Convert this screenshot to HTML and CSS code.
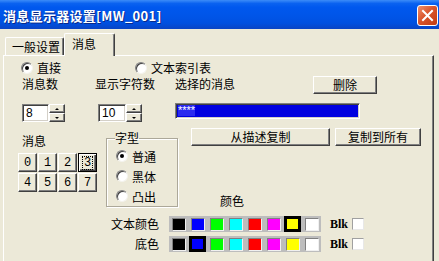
FILE: index.html
```html
<!DOCTYPE html>
<html>
<head>
<meta charset="utf-8">
<link rel="stylesheet" href="styles.css">
</head>
<body>
<div class="titlebar">
  <span class="title">消息显示器设置[MW_001]</span>
  <span class="close"><svg width="13" height="13" viewBox="0 0 13 13"><path d="M2 2 L11 11 M11 2 L2 11" stroke="#fff" stroke-width="2" stroke-linecap="square"/></svg></span>
</div>
<div class="tabs">
  <div class="tab">一般设置</div>
  <div class="tab active">消息</div>
</div>
<div class="panel">
  <div class="r1">
    <label class="opt first"><span class="radio on"></span>直接</label>
    <label class="opt"><span class="radio"></span>文本索引表</label>
  </div>
  <div class="r2">
    <span class="lbl lbl-a">消息数</span>
    <span class="lbl lbl-b">显示字符数</span>
    <span class="lbl lbl-c">选择的消息</span>
    <button class="btn del">删除</button>
  </div>
  <div class="r3">
    <div class="spin s1"><span class="edit">8</span><span class="arrows"><span class="arr up"></span><span class="arr down"></span></span></div>
    <div class="spin s2"><span class="edit">10</span><span class="arrows"><span class="arr up"></span><span class="arr down"></span></span></div>
    <div class="msg-edit"><span class="msg-text">****</span></div>
  </div>
  <div class="mid">
    <div class="left">
      <div class="lbl grid-lbl">消息</div>
      <div class="grid">
        <button class="btn num">0</button>
        <button class="btn num">1</button>
        <button class="btn num">2</button>
        <button class="btn num def"><span class="focus">3</span></button>
        <button class="btn num">4</button>
        <button class="btn num">5</button>
        <button class="btn num">6</button>
        <button class="btn num">7</button>
      </div>
    </div>
    <fieldset class="group">
      <legend>字型</legend>
      <label class="opt gopt"><span class="radio on"></span>普通</label>
      <label class="opt gopt"><span class="radio"></span>黑体</label>
      <label class="opt gopt"><span class="radio"></span>凸出</label>
    </fieldset>
    <div class="right">
      <div class="btnrow">
        <button class="btn copy1">从描述复制</button>
        <button class="btn copy2">复制到所有</button>
      </div>
      <div class="lbl color-head">颜色</div>
    </div>
  </div>
  <div class="colors">
    <div class="crow">
      <span class="clbl">文本颜色</span>
      <div class="strip">
        <span class="cell"><span class="sw" style="background:#000"></span></span>
        <span class="cell"><span class="sw" style="background:#0000ff"></span></span>
        <span class="cell"><span class="sw" style="background:#00ff00"></span></span>
        <span class="cell"><span class="sw" style="background:#00ffff"></span></span>
        <span class="cell"><span class="sw" style="background:#ff0000"></span></span>
        <span class="cell"><span class="sw" style="background:#ff00ff"></span></span>
        <span class="cell"><span class="sw sel" style="background:#ffff00"></span></span>
        <span class="cell"><span class="sw" style="background:#ffffff"></span></span>
      </div>
      <span class="blk">Blk</span>
      <span class="chk"></span>
    </div>
    <div class="crow">
      <span class="clbl">底色</span>
      <div class="strip">
        <span class="cell"><span class="sw" style="background:#000"></span></span>
        <span class="cell"><span class="sw sel" style="background:#0000ff"></span></span>
        <span class="cell"><span class="sw" style="background:#00ff00"></span></span>
        <span class="cell"><span class="sw" style="background:#00ffff"></span></span>
        <span class="cell"><span class="sw" style="background:#ff0000"></span></span>
        <span class="cell"><span class="sw" style="background:#ff00ff"></span></span>
        <span class="cell"><span class="sw" style="background:#ffff00"></span></span>
        <span class="cell"><span class="sw" style="background:#ffffff"></span></span>
      </div>
      <span class="blk">Blk</span>
      <span class="chk"></span>
    </div>
  </div>
</div>
</body>
</html>
```
FILE: styles.css
```css
* { box-sizing: border-box; }
body {
  margin: 0;
  width: 439px;
  height: 261px;
  overflow: hidden;
  background: #ECE9D8;
  font-family: "Noto Sans CJK SC", sans-serif;
  font-size: 12px;
  color: #000;
}
.titlebar {
  height: 29px;
  display: flex;
  align-items: center;
  padding: 2px 1px 0 3px;
  color: #fff;
  background: linear-gradient(to bottom, #3c8cf8 0%, #0a62f0 12%, #0058ee 25%, #0055e8 55%, #0050e0 80%, #0a44c4 100%);
}
.title {
  font-weight: bold;
  font-size: 13px;
  line-height: 16px;
  letter-spacing: 0.3px;
  text-shadow: 1px 1px 0 #0a2a8a;
}
.close {
  margin-left: auto;
  width: 21px;
  height: 21px;
  border: 1px solid #fff;
  border-radius: 3px;
  background: linear-gradient(135deg, #f0906c 0%, #d9552c 45%, #c23a12 100%);
  display: flex;
  align-items: center;
  justify-content: center;
}
.tabs {
  display: flex;
  align-items: flex-end;
  height: 26px;
  padding-left: 5px;
}
.tab {
  width: 59px;
  height: 18px;
  padding: 1px 0 0 6px;
  line-height: 15px;
  border-top: 1px solid #fff;
  border-left: 1px solid #fff;
  border-right: 1px solid #404040;
  box-shadow: inset -1px 0 #808080;
  border-radius: 2px 2px 0 0;
  background: #ECE9D8;
}
.tab.active {
  width: 51px;
  height: 23px;
  padding: 2px 0 0 7px;
  margin-bottom: -1px;
  position: relative;
  z-index: 1;
}
.panel {
  margin-left: 3px;
  width: 431px;
  height: 206px;
  border-top: 1px solid #fff;
  border-left: 1px solid #fff;
  border-right: 1px solid #404040;
  box-shadow: inset -1px 0 #808080;
}
.opt {
  display: flex;
  align-items: center;
  gap: 4px;
  line-height: 13px;
}
.radio {
  width: 12px;
  height: 12px;
  border-radius: 50%;
  background: #fff;
  border: 1px solid;
  border-color: #808080 #f4f3ee #f4f3ee #808080;
  box-shadow: inset 1px 1px 0 #404040;
  display: flex;
  align-items: center;
  justify-content: center;
}
.radio.on::after {
  content: "";
  width: 4px;
  height: 4px;
  border-radius: 50%;
  background: #000;
}
.r1 {
  display: flex;
  margin-top: 5px;
  height: 13px;
  padding-left: 17px;
}
.r1 .first { width: 114px; }
.lbl { line-height: 14px; }
.r2 {
  display: flex;
  margin-top: 2px;
  height: 18px;
  padding-left: 18px;
}
.lbl-a { width: 73px; padding-top: 1px; }
.lbl-b { width: 80px; padding-top: 1px; }
.lbl-c { width: 138px; padding-top: 1px; }
.btn {
  font-family: "Noto Sans CJK SC", sans-serif;
  font-size: 12px;
  line-height: 14px;
  padding: 0;
  color: #000;
  background: #ECE9D8;
  border: 1px solid;
  border-color: #fff #404040 #404040 #fff;
  box-shadow: inset -1px -1px 0 #808080;
}
.del { width: 64px; height: 18px; }
.r3 {
  display: flex;
  margin-top: 10px;
  height: 18px;
  padding-left: 18px;
}
.spin { display: flex; height: 18px; }
.s1 { width: 43px; }
.s2 { width: 44px; margin-left: 33px; }
.edit {
  flex: 1;
  background: #fff;
  border: 1px solid;
  border-color: #808080 #fff #fff #808080;
  box-shadow: inset 1px 1px 0 #404040, inset -1px -1px 0 #D4D0C8;
  padding-left: 3px;
  font-family: "Liberation Sans", sans-serif;
  font-size: 12px;
  line-height: 16px;
}
.arrows {
  width: 16px;
  display: flex;
  flex-direction: column;
}
.arr {
  flex: 1;
  background: #ECE9D8;
  border: 1px solid;
  border-color: #fff #404040 #404040 #fff;
  box-shadow: inset -1px -1px 0 #808080;
  display: flex;
  align-items: center;
  justify-content: center;
}
.arr::after {
  content: "";
  width: 0;
  height: 0;
  border-left: 2px solid transparent;
  border-right: 2px solid transparent;
}
.arr.up::after { border-bottom: 2px solid #000; }
.arr.down::after { border-top: 2px solid #000; }
.msg-edit {
  width: 185px;
  height: 16px;
  margin-left: 33px;
  margin-top: -1px;
  background: #0000e0;
  border: 1px solid;
  border-color: #808080 #fff #fff #808080;
  box-shadow: inset 1px 1px 0 #404040, inset -1px -1px 0 #D4D0C8;
  padding: 1px 0 0 2px;
  display: flex;
  align-items: flex-start;
}
.msg-text {
  color: #fff;
  font-family: "Liberation Sans", sans-serif;
  font-size: 11px;
  line-height: 11px;
  height: 11px;
  background: #2a2af0;
  display: inline-block;
}
.mid {
  display: flex;
  margin-top: 6px;
  height: 79px;
}
.left {
  margin-left: 14px;
  width: 79px;
}
.grid-lbl { margin-top: 6px; padding-left: 4px; }
.grid {
  margin-top: 5px;
  display: grid;
  grid-template-columns: repeat(4, 19px);
  grid-auto-rows: 19px;
  gap: 1px;
}
.num {
  font-family: "Liberation Mono", monospace;
  font-size: 12px;
  display: flex;
  align-items: center;
  justify-content: center;
}
.num.def {
  border: 1px solid #000;
  box-shadow: inset 1px 1px 0 #fff, inset -1px -1px 0 #404040, inset -2px -2px 0 #808080;
}
.focus {
  outline: 1px dotted #000;
  padding: 0 1px;
  line-height: 12px;
}
.group {
  margin: 3px 0 0 9px;
  padding: 0 0 0 8px;
  width: 72px;
  height: 76px;
  border: 1px solid #aca899;
  box-shadow: inset 1px 1px 0 #fff, 1px 1px 0 #fff;
  min-width: 0;
}
.group legend {
  padding: 0;
  line-height: 14px;
}
.gopt {
  height: 20px;
  margin-left: 1px;
}
.gopt:first-of-type { margin-top: 1px; }
.right { margin-left: 13px; }
.btnrow { display: flex; gap: 5px; }
.copy1 { width: 139px; height: 18px; }
.copy2 { width: 86px; height: 18px; }
.color-head {
  margin-left: 29px;
  margin-top: 48px;
  line-height: 13px;
}
.colors { margin-top: 9px; }
.crow {
  display: flex;
  align-items: center;
  height: 16px;
}
.crow + .crow { margin-top: 4px; }
.clbl {
  width: 155px;
  text-align: right;
  line-height: 14px;
}
.strip {
  margin-left: 10px;
  width: 152px;
  height: 16px;
  display: flex;
  background: #bdbdbd;
}
.cell {
  width: 19px;
  height: 16px;
  display: flex;
  align-items: center;
  justify-content: center;
}
.sw {
  width: 14px;
  height: 13px;
  border: 1px solid;
  border-color: #808080 #f0f0f0 #f0f0f0 #808080;
}
.sw.sel {
  width: 17px;
  height: 16px;
  border: 3px solid #000;
}
.blk {
  margin-left: 9px;
  width: 20px;
  font-family: "Liberation Serif", serif;
  font-weight: bold;
  font-size: 12px;
  line-height: 14px;
}
.chk {
  margin-left: 2px;
  width: 12px;
  height: 12px;
  background: #fff;
  border: 1px solid;
  border-color: #a0a0a0 #e8e8e8 #e8e8e8 #a0a0a0;
}
```
